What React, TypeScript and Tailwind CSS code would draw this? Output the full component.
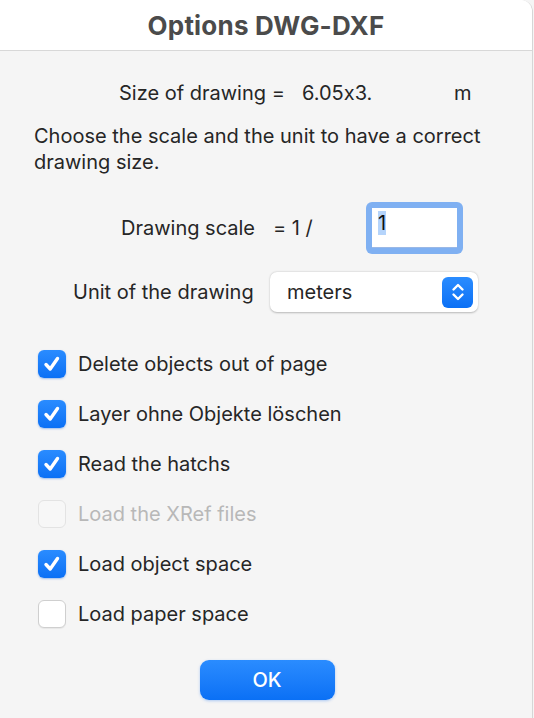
import React from 'react';

const Check: React.FC<{ checked?: boolean; disabled?: boolean }> = ({ checked, disabled }) => {
    if (checked) {
        return (
            <div className="w-[28px] h-[28px] rounded-[6px] bg-gradient-to-b from-[#2a8cff] to-[#0a70f5] shadow-[0_1px_2px_rgba(0,90,220,0.35)] flex items-center justify-center shrink-0">
                <svg width="20" height="20" viewBox="0 0 20 20" fill="none">
                    <path d="M4 10.5 L8.2 15 L15.5 4.5" stroke="white" strokeWidth="3.4" strokeLinecap="round" strokeLinejoin="round" />
                </svg>
            </div>
        );
    }
    return (
        <div
            className={
                disabled
                    ? 'w-[28px] h-[28px] rounded-[6px] bg-[#f7f7f7] border border-[#e3e3e3] shrink-0'
                    : 'w-[28px] h-[28px] rounded-[6px] bg-white border border-[#cfcfcf] shadow-[0_1px_1px_rgba(0,0,0,0.06)] shrink-0'
            }
        />
    );
};

const App: React.FC = () => {
    const options = [
        { label: 'Delete objects out of page', checked: true },
        { label: 'Layer ohne Objekte löschen', checked: true },
        { label: 'Read the hatchs', checked: true },
        { label: 'Load the XRef files', disabled: true },
        { label: 'Load object space', checked: true },
        { label: 'Load paper space' },
    ];

    return (
        <div className="w-[534px] h-[718px] bg-[#f5f5f5] overflow-hidden font-['Inter',sans-serif] [font-feature-settings:'calt'_0] text-[#262626] text-[20px]">
            <div className="w-[533px] h-[718px] flex flex-col border-r border-[#d6d6d6] rounded-tr-[12px] overflow-hidden">
                {/* Title bar */}
                <div className="h-[51px] bg-white border-b border-[#d8d8d8] flex items-center justify-center">
                    <span className="text-[26px] font-bold text-[#4b4b4b] tracking-[0.2px]">Options DWG-DXF</span>
                </div>

                {/* Size row */}
                <div className="flex items-center h-[26px] mt-[29px]">
                    <span className="ml-[119px] w-[183px]">Size of drawing =</span>
                    <span className="w-[152px]">6.05x3.</span>
                    <span>m</span>
                </div>

                <p className="mt-[17px] mx-[34px] leading-[26px]">
                    Choose the scale and the unit to have a correct drawing size.
                </p>

                {/* Scale row */}
                <div className="flex items-center mt-[27px] h-[52px]">
                    <span className="ml-[121px] w-[152px]">Drawing scale</span>
                    <span className="w-[93px]">= 1 /</span>
                    <div className="w-[97px] h-[52px] rounded-[6px] bg-[#7fb0f2] p-[6px]">
                        <div className="w-full h-full bg-white border-b border-[#9ab8e6] pl-[6px] pt-[2px] leading-[26px]">
                            <span className="bg-[#b5d4fb] text-[#111]">1</span>
                        </div>
                    </div>
                </div>

                {/* Unit row */}
                <div className="flex items-center mt-[18px]">
                    <span className="ml-[73px] w-[197px]">Unit of the drawing</span>
                    <div className="w-[208px] h-[40px] bg-white rounded-[7px] shadow-[0_0.5px_2px_rgba(0,0,0,0.25)] flex items-center justify-between pl-[17px] pr-[5px]">
                        <span>meters</span>
                        <div className="w-[31px] h-[31px] rounded-[6px] bg-gradient-to-b from-[#2a8cff] to-[#0a70f5] flex items-center justify-center">
                            <svg width="16" height="24" viewBox="0 0 16 24" fill="none">
                                <path d="M3.5 9.5 L8 5 L12.5 9.5" stroke="white" strokeWidth="2.4" strokeLinecap="round" strokeLinejoin="round" />
                                <path d="M3.5 14.5 L8 19 L12.5 14.5" stroke="white" strokeWidth="2.4" strokeLinecap="round" strokeLinejoin="round" />
                            </svg>
                        </div>
                    </div>
                </div>

                {/* Checkboxes */}
                <div className="flex flex-col gap-[22px] mt-[38px] ml-[38px]">
                    {options.map((o, idx) => (
                        <div key={idx} className="flex items-center gap-[12px] h-[28px]">
                            <Check checked={o.checked} disabled={o.disabled} />
                            <span className={o.disabled ? 'text-[#b8b8b8]' : 'text-[#262626]'}>
                                {o.label}
                            </span>
                        </div>
                    ))}
                </div>

                {/* OK */}
                <div className="flex justify-center mt-[32px] pl-[2px]">
                    <button className="w-[135px] h-[40px] rounded-[9px] bg-gradient-to-b from-[#2a8cff] to-[#0a70f5] text-white text-[20px] font-medium shadow-[0_1px_3px_rgba(0,100,240,0.3)]">
                        OK
                    </button>
                </div>
            </div>
        </div>
    );
};

export default App;
